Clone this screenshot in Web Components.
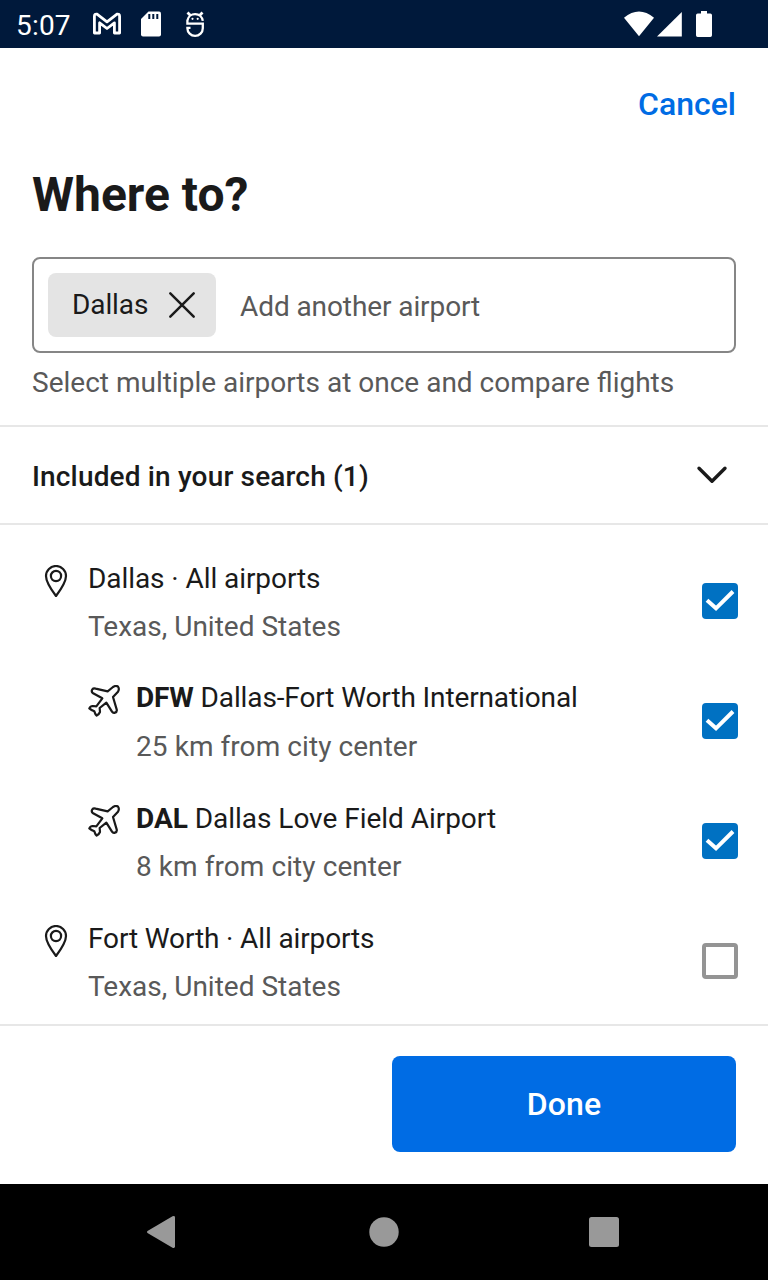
<!DOCTYPE html>
<html lang="en">
<head>
<meta charset="utf-8">
<title>Where to?</title>
<style>
html, body { margin: 0; }
body { width: 768px; height: 1280px; overflow: hidden; background: #fff; color: #1a1a1a; font-family: Roboto, sans-serif; font-size: 28px; }
</style>
</head>
<body>
<airport-screen></airport-screen>
<script>
const define = (name, markup) => {
  const template = document.createElement('template');
  template.innerHTML = markup;
  customElements.define(name, class extends HTMLElement {
    constructor() {
      super();
      this.attachShadow({ mode: 'open' }).append(template.content.cloneNode(true));
    }
  });
};

define('status-bar', `
<style>
:host { display: flex; align-items: center; height: 48px; box-sizing: border-box; background: #00193b; color: #fff; padding: 0 55px 0 16px; font-size: 28px; line-height: 48px; }
span { width: 76px; padding-top: 3px; white-space: nowrap; letter-spacing: .2px; }
svg { display: block; flex: none; }
.gap { flex: 1; }
</style>
<span>5:07</span>
<svg width="120" height="48" viewBox="92 0 120 48" fill="none" stroke="#fff">
  <path d="M94.4 16.2Q94.4 13.600 97 14.200L107 21.800L117 14.200Q119.600 13.600 119.600 16.200V33H114.400V22.800L107 28.500L99.600 22.800V33H94.400Z" stroke-width="2.800" stroke-linejoin="round"/>
  <path d="M148.500 11.500H159a2 2 0 0 1 2 2V34.500a2 2 0 0 1-2 2H143a2 2 0 0 1-2-2V19Z" fill="#fff" stroke="none"/>
  <path d="M149.300 14V19M153.300 14V19M157.300 14V19" stroke="#00193b" stroke-width="2"/>
  <path d="M202.800 20.800A7.800 7.800 0 0 0 187.400 20.500V23.700H202.800V28.200A7.700 7.700 0 0 1 187.400 28.200V27.800H190.500" stroke-width="2.300"/>
  <path d="M187.500 12.500L190.500 15.500M202.500 12.500L199.500 15.500" stroke-width="2.800"/>
  <circle cx="192.500" cy="18.800" r="1.100" fill="#fff" stroke="none"/><circle cx="197.700" cy="18.800" r="1.100" fill="#fff" stroke="none"/>
</svg>
<div class="gap"></div>
<svg width="90" height="48" viewBox="623 0 90 48" fill="#fff">
  <path d="M639 36.200L624 17.800Q639 5.200 654 17.800Z"/>
  <path d="M657 36.500L681.800 12V36.500Z"/>
  <path d="M701 11H707V13.500H710.300a1.700 1.700 0 0 1 1.700 1.700V35.300a1.700 1.700 0 0 1-1.700 1.700H697.700a1.700 1.700 0 0 1-1.700-1.700V15.200a1.700 1.700 0 0 1 1.700-1.700H701Z"/>
</svg>`);

define('screen-heading', `
<style>
:host { display: block; padding: 0 32px; }
.cancel { height: 113px; line-height: 112px; text-align: right; color: #006ce4; font-weight: 500; font-size: 32px; }
h1 { margin: 0; height: 96px; line-height: 68px; font-size: 48px; font-weight: 700; }
</style>
<div class="cancel"><slot name="action"></slot></div>
<h1><slot></slot></h1>`);

define('filter-chip', `
<style>
:host { display: flex; align-items: center; box-sizing: border-box; width: 168px; height: 64px; border-radius: 8px; background: #e4e4e4; padding-left: 24px; }
span { width: 96px; line-height: 62px; letter-spacing: -.1px; }
svg { display: block; }
</style>
<span><slot></slot></span>
<svg width="28" height="28" viewBox="0 0 28 28" fill="none" stroke="#1a1a1a" stroke-width="2.500" stroke-linecap="round"><path d="M2.300 2.300L25.700 25.700M25.700 2.300L2.300 25.700"/></svg>`);

define('search-field', `
<style>
:host { display: block; padding: 0 32px; }
.box { display: flex; align-items: center; box-sizing: border-box; height: 96px; border: 2px solid #868686; border-radius: 8px; padding-left: 14px; gap: 24px; }
.placeholder, .hint { color: #595959; }
.placeholder { padding-top: 2px; letter-spacing: -.09px; }
.hint { height: 72px; line-height: 60px; white-space: nowrap; }
</style>
<div class="box"><slot></slot><div class="placeholder">Add another airport</div></div>
<div class="hint">Select multiple airports at once and compare flights</div>`);

define('summary-row', `
<style>
:host { display: flex; justify-content: space-between; align-items: center; box-sizing: border-box; height: 100px; border-top: 2px solid #e7e7e7; border-bottom: 2px solid #e7e7e7; padding: 0 40px 0 32px; font-weight: 500; letter-spacing: .16px; }
span { padding-top: 2px; }
svg { display: block; }
</style>
<span><slot></slot></span>
<svg width="32" height="20" viewBox="0 0 32 20" fill="none" stroke="#1a1a1a" stroke-width="3.400" stroke-linecap="round" stroke-linejoin="round"><path d="M3 3.300L16 16.300L29 3.300"/></svg>`);

define('pin-icon', `
<style>:host, svg { display: block; width: 32px; height: 32px; }</style>
<svg viewBox="0 0 32 32" fill="none" stroke="#1a1a1a" stroke-width="2.200"><path d="M16 31C13 27 6 17 6 11a10 10 0 0 1 20 0C26 17 19 27 16 31Z" stroke-linejoin="round"/><circle cx="16" cy="11" r="5.100"/></svg>`);

define('plane-icon', `
<style>:host, svg { display: block; width: 32px; height: 32px; }</style>
<svg viewBox="24 30 96 96" fill="none" stroke="#1a1a1a" stroke-width="6.600" stroke-linejoin="round"><path d="M83 49L99 36Q108 30 114 35Q119 41 114 50L99 66L110 103Q112 111 105 113Q99 115 96 110L79 83L59 99L60 111Q57 118 50 122Q46 119 43 109Q34 105 28 100Q31 93 38 93L49 94L67 70L38 54Q33 49 37 43Q40 39 47 41Z"/></svg>`);

define('check-mark', `
<style>
:host { display: block; box-sizing: border-box; width: 36px; height: 36px; border-radius: 4px; background: #0071c2; }
:host([empty]) { background: #fff; border: 4px solid #949494; }
:host([empty]) svg { display: none; }
svg { display: block; }
</style>
<svg width="36" height="36" viewBox="0 0 36 36" fill="none" stroke="#fff" stroke-width="4"><path d="M5 17.300L14 25.300L31 8.500"/></svg>`);

define('airport-row', `
<style>
:host { display: flex; box-sizing: border-box; height: 120px; padding: 0 30px 0 40px; }
:host([nested]) { padding-left: 88px; }
.icon { width: 48px; padding-top: 24px; }
.text { flex: 1; line-height: 48px; padding-top: 14px; white-space: nowrap; }
.title { margin-top: var(--title-shift, 0px); margin-bottom: calc(0px - var(--title-shift, 0px)); letter-spacing: var(--title-spacing, -.07px); }
.sub { color: #595959; }
:host([nested]) .sub { letter-spacing: .07px; }
.check { padding-top: 42px; }
</style>
<div class="icon"><slot name="icon"></slot></div>
<div class="text"><div class="title"><slot></slot></div><div class="sub"><slot name="detail"></slot></div></div>
<div class="check"><slot name="check"></slot></div>`);

define('done-footer', `
<style>
:host { display: flex; justify-content: flex-end; box-sizing: border-box; height: 160px; border-top: 2px solid #e7e7e7; padding: 30px 32px 0; background: #fff; }
button { width: 344px; height: 96px; padding: 0; border: 0; border-radius: 8px; background: #006ce4; color: #fff; font: 500 32px Roboto, sans-serif; letter-spacing: .1px; }
</style>
<button><slot></slot></button>`);

define('nav-bar', `
<style>
:host { display: flex; justify-content: space-between; align-items: center; box-sizing: border-box; height: 96px; background: #000; padding: 0 148px 0 146px; }
svg { display: block; }
</style>
<svg width="32" height="36" viewBox="0 0 32 36" fill="#999"><path d="M1.500 17L26.500 2.300Q29 1.500 29 3.500V32.500Q29 34.500 26.500 33.700L1.500 19Q.3 18 1.500 17Z"/></svg>
<svg width="32" height="32" viewBox="0 0 32 32" fill="#999"><circle cx="17" cy="16" r="14.700"/></svg>
<svg width="32" height="32" viewBox="0 0 32 32" fill="#999"><rect x="1" y="1" width="30" height="30" rx="2.500"/></svg>`);

define('airport-screen', `
<style>
:host { display: flex; flex-direction: column; width: 768px; height: 1280px; }
.list { flex: 1; min-height: 0; overflow: hidden; padding-top: 16px; }
</style>
<status-bar></status-bar>
<screen-heading><span slot="action">Cancel</span>Where to?</screen-heading>
<search-field><filter-chip>Dallas</filter-chip></search-field>
<summary-row>Included in your search (1)</summary-row>
<div class="list">
  <airport-row><pin-icon slot="icon"></pin-icon>Dallas · All airports<span slot="detail">Texas, United States</span><check-mark slot="check"></check-mark></airport-row>
  <airport-row nested style="--title-shift:-1px;--title-spacing:-.12px"><plane-icon slot="icon"></plane-icon><b>DFW</b> Dallas-Fort Worth International<span slot="detail">25 km from city center</span><check-mark slot="check"></check-mark></airport-row>
  <airport-row nested style="--title-spacing:-.03px"><plane-icon slot="icon"></plane-icon><b>DAL</b> Dallas Love Field Airport<span slot="detail">8 km from city center</span><check-mark slot="check"></check-mark></airport-row>
  <airport-row style="--title-spacing:-.13px"><pin-icon slot="icon"></pin-icon>Fort Worth · All airports<span slot="detail">Texas, United States</span><check-mark slot="check" empty></check-mark></airport-row>
</div>
<done-footer>Done</done-footer>
<nav-bar></nav-bar>`);
</script>
</body>
</html>
